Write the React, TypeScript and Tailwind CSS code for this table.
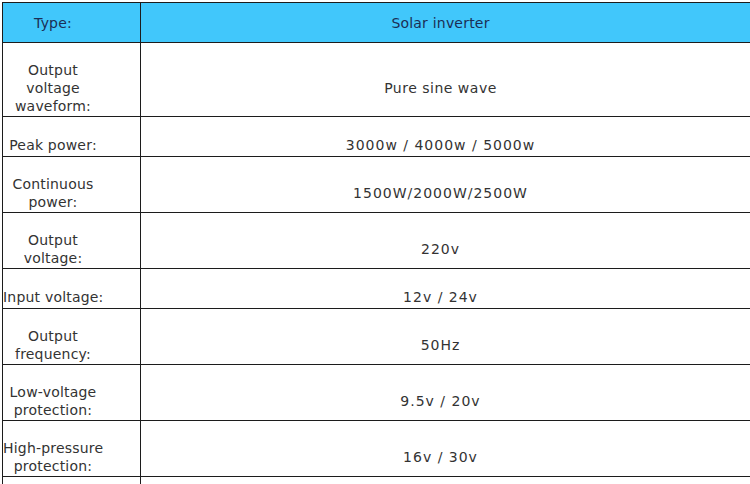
const rows: { label: string[]; value: string; h: string; wide?: boolean }[] = [
  { label: ["Output", "voltage", "waveform:"], value: "Pure sine wave", h: "h-[74px]" },
  { label: ["Peak power:"], value: "3000w / 4000w / 5000w", h: "h-[40px]", wide: true },
  { label: ["Continuous", "power:"], value: "1500W/2000W/2500W", h: "h-[56px]", wide: true },
  { label: ["Output", "voltage:"], value: "220v", h: "h-[56px]", wide: true },
  { label: ["Input voltage:"], value: "12v / 24v", h: "h-[40px]", wide: true },
  { label: ["Output", "frequency:"], value: "50Hz", h: "h-[56px]", wide: true },
  { label: ["Low-voltage", "protection:"], value: "9.5v / 20v", h: "h-[56px]", wide: true },
  { label: ["High-pressure", "protection:"], value: "16v / 30v", h: "h-[56px]", wide: true },
];

export default function App() {
  return (
    <div
      className="w-[750px] h-[484px] overflow-hidden bg-white pt-[2px] pl-[2px] text-[14px] leading-[18px] tracking-[0.2px]"
      style={{ fontFamily: '"DejaVu Sans", Verdana, sans-serif' }}
    >
      <div className="w-[780px] border-t border-l border-[#1c1c1c]">
        {/* Header */}
        <div className="flex h-[40px] border-b border-[#1c1c1c] bg-[#41c7fb] text-[#1b2e55]">
          <div className="w-[138px] shrink-0 border-r border-[#1c1c1c] flex items-center">
            <div className="w-[100px] text-center">Type:</div>
          </div>
          <div className="flex-1 flex items-center">
            <div className="w-[599px] text-center">Solar inverter</div>
          </div>
        </div>

        {rows.map((r) => (
          <div key={r.value} className={`flex ${r.h} border-b border-[#1c1c1c] text-[#333333]`}>
            <div className="w-[138px] shrink-0 border-r border-[#1c1c1c] flex items-center pt-[18px] pb-[2px]">
              <div className="w-[100px] text-center whitespace-nowrap">
                {r.label.map((l) => (
                  <div key={l}>{l}</div>
                ))}
              </div>
            </div>
            <div className="flex-1 flex items-center pt-[18px] pb-[2px]">
              <div className={`w-[599px] text-center whitespace-nowrap ${r.wide ? "tracking-[1px]" : "tracking-[0.5px]"}`}>
                {r.value}
              </div>
            </div>
          </div>
        ))}

        {/* partial next row */}
        <div className="flex h-[20px]">
          <div className="w-[138px] shrink-0 border-r border-[#1c1c1c]" />
          <div className="flex-1" />
        </div>
      </div>
    </div>
  );
}
